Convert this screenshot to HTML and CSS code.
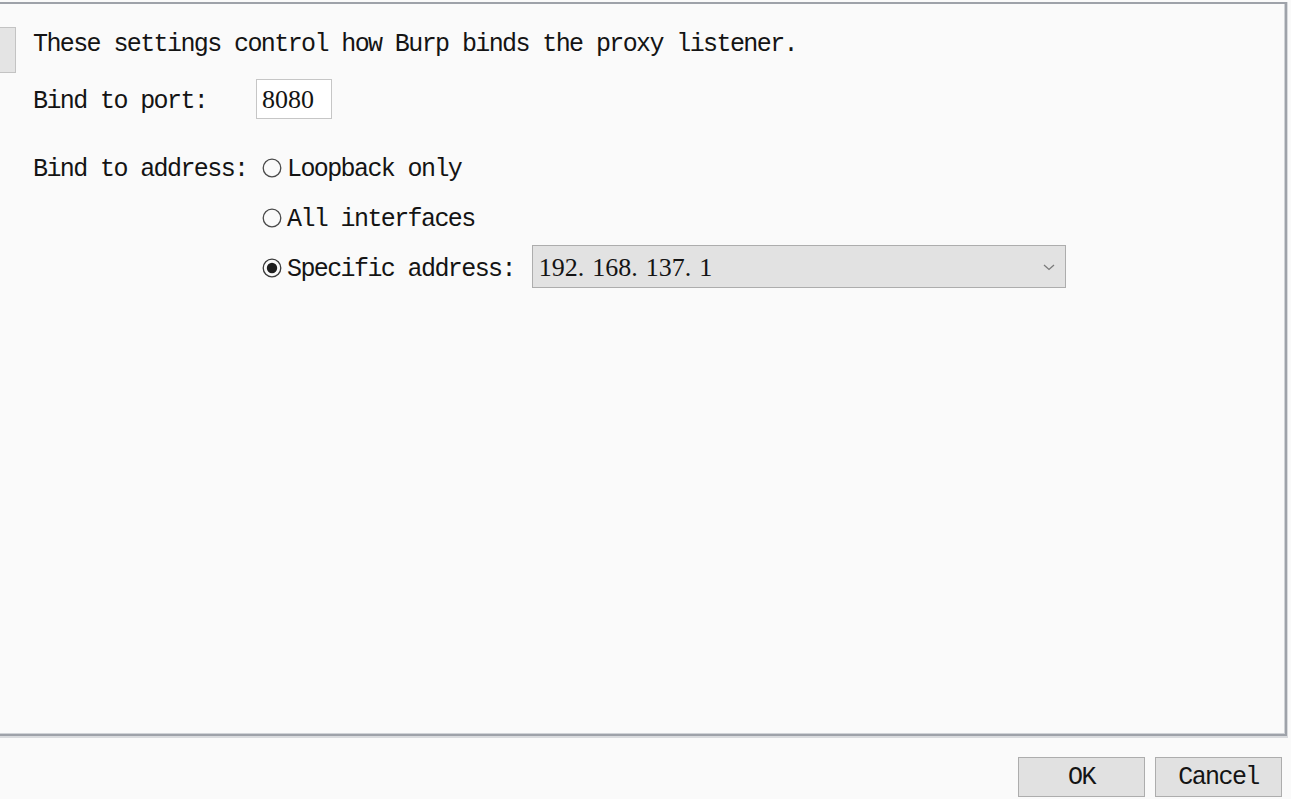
FILE: index.html
```html
<!DOCTYPE html>
<html>
<head>
<meta charset="utf-8">
<link rel="stylesheet" href="styles.css">
</head>
<body>
<div class="panel">
  <div class="content">
    <div class="intro">
      <div class="side-btn"></div>
      <span class="txt intro-txt">These settings control how Burp binds the proxy listener.</span>
    </div>
    <div class="port-row">
      <span class="txt port-label">Bind to port:</span>
      <div class="port-input">8080</div>
    </div>
    <div class="addr-grid">
      <span class="txt addr-label">Bind to address:</span>
      <div class="radio-row">
        <svg class="radio" width="20" height="20" viewBox="0 0 20 20"><circle cx="10" cy="10" r="8.8" fill="none" stroke="#4a4a4a" stroke-width="1.3"/></svg>
        <span class="txt">Loopback only</span>
      </div>
      <div class="radio-row r2">
        <svg class="radio" width="20" height="20" viewBox="0 0 20 20"><circle cx="10" cy="10" r="8.8" fill="none" stroke="#4a4a4a" stroke-width="1.3"/></svg>
        <span class="txt">All interfaces</span>
      </div>
      <div class="radio-row r3">
        <svg class="radio" width="20" height="20" viewBox="0 0 20 20"><circle cx="10" cy="10" r="8.8" fill="none" stroke="#3a3a3a" stroke-width="1.3"/><circle cx="10" cy="10" r="5.2" fill="#1e1e1e"/></svg>
        <span class="txt">Specific address:</span>
        <div class="select">
          <span class="ip">192<span class="dot">.</span>168<span class="dot">.</span>137<span class="dot">.</span>1</span>
          <svg class="chev" width="12" height="7" viewBox="0 0 12 7"><path d="M1 1 L6 5.5 L11 1" fill="none" stroke="#7a7a7a" stroke-width="1.3"/></svg>
        </div>
      </div>
    </div>
  </div>
</div>
<div class="buttons">
  <div class="btn">OK</div>
  <div class="btn">Cancel</div>
</div>
</body>
</html>
```

FILE: styles.css
```css
html, body {
  margin: 0;
  padding: 0;
}
body {
  background: #fafafa;
  width: 1291px;
  height: 799px;
  overflow: hidden;
  display: flex;
  flex-direction: column;
  color: #141414;
  font-family: "Liberation Mono", monospace;
}
.panel {
  box-sizing: border-box;
  margin-top: 2px;
  margin-right: 4px;
  height: 734px;
  border-top: 2px solid #9ea2a9;
  border-right: 2px solid #9ea2a9;
  border-bottom: 2px solid #9ea2a9;
  box-shadow: 0 1px 0 1px #d9dbde, inset -1px -1px 0 0 #cfd2d6;
  background: #fafafa;
  overflow: hidden;
}
.content {
  padding: 22px 0 0 33px;
  display: flex;
  flex-direction: column;
}
.txt {
  font-size: 25px;
  letter-spacing: -1.6px;
  line-height: 30px;
  padding-top: 6px;
  white-space: pre;
}
.intro {
  display: flex;
  align-items: flex-start;
  height: 36px;
}
.intro-txt {
  padding-top: 4px;
}
.side-btn {
  flex: none;
  width: 40px;
  height: 46px;
  margin-top: 1px;
  margin-left: -57px;
  margin-right: 17px;
  background: #e4e4e4;
  border: 1px solid #c3c3c3;
  box-sizing: border-box;
}
.port-row {
  display: flex;
  align-items: center;
  margin-top: 17px;
  height: 40px;
}
.port-label {
  width: 223px;
}
.port-input {
  box-sizing: border-box;
  width: 76px;
  height: 40px;
  background: #fff;
  border: 1px solid #c6c6c6;
  font-family: "Liberation Serif", serif;
  font-size: 26px;
  line-height: 40px;
  padding-left: 5px;
}
.addr-grid {
  display: grid;
  grid-template-columns: 228px 1fr;
  grid-auto-rows: 43px;
  row-gap: 7px;
  margin-top: 26px;
}
.addr-label {
  grid-column: 1;
  grid-row: 1;
  align-self: center;
}
.radio-row {
  grid-column: 2;
  display: flex;
  align-items: center;
}
.r2 { grid-row: 2; }
.r3 { grid-row: 3; }
.radio {
  flex: none;
  margin-left: 1px;
  margin-right: 5px;
  margin-top: 2px;
}
.select {
  box-sizing: border-box;
  width: 534px;
  height: 43px;
  margin-left: 17px;
  background: #e2e2e2;
  border: 1px solid #adadad;
  display: flex;
  align-items: center;
  justify-content: space-between;
  padding: 0 10px 0 6px;
}
.ip {
  font-family: "Liberation Serif", serif;
  font-size: 26px;
  padding-top: 3px;
}
.dot {
  margin-right: 8px;
}
.chev {
  margin-top: 2px;
}
.buttons {
  display: flex;
  justify-content: flex-end;
  gap: 10px;
  margin-top: 21px;
  padding-right: 9px;
}
.btn {
  box-sizing: border-box;
  width: 127px;
  height: 40px;
  background: #e1e1e1;
  border: 1px solid #adadad;
  font-size: 25px;
  letter-spacing: -1.6px;
  line-height: 38px;
  padding-top: 1px;
  text-align: center;
}
```
